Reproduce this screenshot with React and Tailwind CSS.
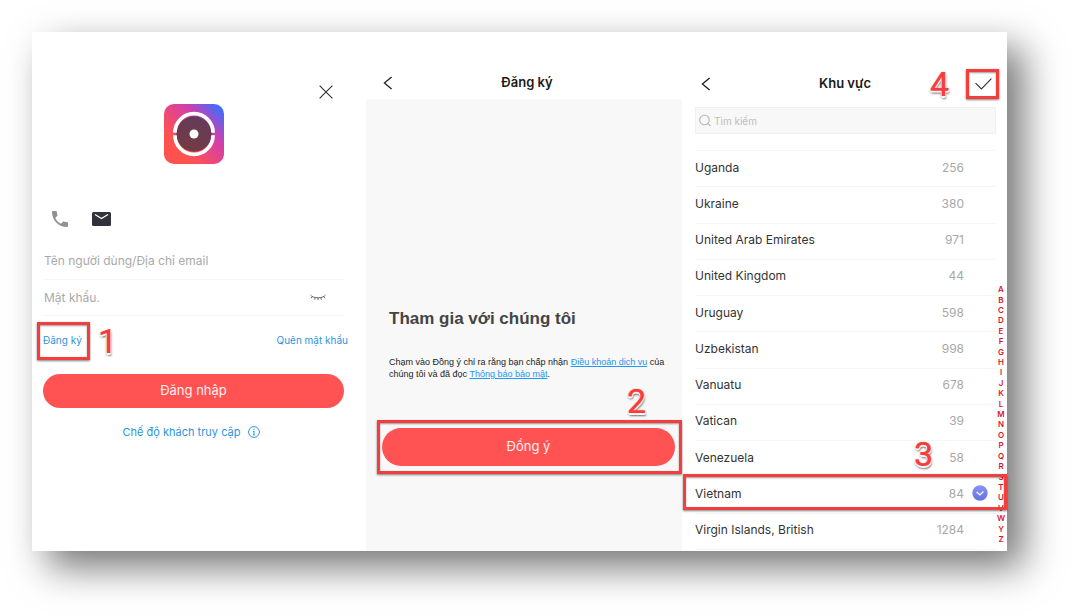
import React from 'react';

const countries = [
  ['Uganda', '256'],
  ['Ukraine', '380'],
  ['United Arab Emirates', '971'],
  ['United Kingdom', '44'],
  ['Uruguay', '598'],
  ['Uzbekistan', '998'],
  ['Vanuatu', '678'],
  ['Vatican', '39'],
  ['Venezuela', '58'],
  ['Vietnam', '84'],
  ['Virgin Islands, British', '1284'],
];

const letters = 'ABCDEFGHIJKLMNOPQRSTUVWYZ'.split('');

function Highlight({ className }) {
  return (
    <span
      aria-hidden="true"
      className={`pointer-events-none absolute z-20 border-[3px] border-[#f43d3d] shadow-[0_1px_2px_rgba(0,0,0,0.5),inset_0_1px_2px_rgba(0,0,0,0.4)] ${className}`}
    />
  );
}

function Step({ children, className }) {
  return (
    <span
      className={`pointer-events-none absolute z-20 font-['Roboto',sans-serif] text-[34px] leading-[34px] text-[#fa3c3c] [text-shadow:0_0_1px_#fa3c3c,1px_1px_0_#fff,-1px_1px_0_#fff,0_2px_0_#fff,1px_3px_2px_rgba(0,0,0,0.5),-1px_2px_2px_rgba(0,0,0,0.3)] ${className}`}
    >
      {children}
    </span>
  );
}

function BackButton() {
  return (
    <button type="button" aria-label="Quay lại" className="flex h-4 w-4 items-center justify-center text-[#222]">
      <svg width="10" height="14" viewBox="0 0 10 14" fill="none" stroke="currentColor" strokeWidth="1.3">
        <path d="M8.6 1 1.4 7l7.2 6" />
      </svg>
    </button>
  );
}

function Logo() {
  return (
    <svg width="60" height="60" viewBox="0 0 61 61" className="block">
      <defs>
        <linearGradient id="tile" x1="0.2" y1="0.75" x2="0.97" y2="0.03">
          <stop offset="0.05" stopColor="#ff524f" />
          <stop offset="0.58" stopColor="#d43eab" />
          <stop offset="0.95" stopColor="#3f6dff" />
        </linearGradient>
        <linearGradient id="disc" x1="0.3" y1="1" x2="0.6" y2="0">
          <stop offset="0" stopColor="#753b40" />
          <stop offset="1" stopColor="#643a5c" />
        </linearGradient>
      </defs>
      <rect width="61" height="61" rx="10" fill="url(#tile)" />
      <circle cx="30.5" cy="30.5" r="18" fill="url(#disc)" />
      <path d="M11.1 29.2a19.4 19.4 0 0 1 38.8 0M11.1 31.8a19.4 19.4 0 0 0 38.8 0" fill="none" stroke="#fff" strokeWidth="3.8" />
      <circle cx="30.5" cy="30.5" r="4.6" fill="#fff" />
    </svg>
  );
}

function LoginPanel() {
  return (
    <section className="flex flex-col bg-white pl-[11px] pr-[22px]">
      <div className="flex justify-end pr-2.5 pt-[52px]">
        <button type="button" aria-label="Đóng" className="p-px text-[#333]">
          <svg width="14" height="14" viewBox="0 0 14 14" fill="none" stroke="currentColor" strokeWidth="1.1">
            <path d="M.6.6l12.8 12.8M13.4.6.6 13.4" />
          </svg>
        </button>
      </div>
      <div className="flex justify-center pt-1">
        <Logo />
      </div>
      <div className="mt-[47px] flex items-center gap-6 pl-[9px]">
        <button type="button" aria-label="Điện thoại" className="text-[#919191]">
          <svg width="16" height="16" viewBox="3 3 18 18" fill="currentColor" className="block">
            <path d="M6.62 10.79c1.44 2.83 3.76 5.14 6.59 6.59l2.2-2.2c.27-.27.67-.36 1.02-.24 1.12.37 2.33.57 3.57.57.55 0 1 .45 1 1V20c0 .55-.45 1-1 1C10.61 21 3 13.39 3 4c0-.55.45-1 1-1h3.5c.55 0 1 .45 1 1 0 1.25.2 2.45.57 3.57.11.35.03.74-.25 1.02z" />
          </svg>
        </button>
        <button type="button" aria-label="Email">
          <svg width="19" height="14" viewBox="0 0 19 14" className="block">
            <rect width="19" height="14" rx="1.5" fill="#31323c" />
            <path d="M3 2.5 9.5 6.5 16 2.5" fill="none" stroke="#fff" strokeWidth="1.2" />
          </svg>
        </button>
      </div>
      <label className="mt-[15px] flex h-[38px] items-center border-b border-[#f5f5f5]">
        <input
          aria-label="Tên người dùng/Địa chỉ email"
          placeholder="Tên người dùng/Địa chỉ email"
          className="w-full bg-transparent pl-px text-[12px] leading-4 outline-none placeholder:text-[#a9a9a9]"
        />
      </label>
      <div className="flex h-9 items-center border-b border-[#f5f5f5] pr-[18px]">
        <input
          type="password"
          aria-label="Mật khẩu"
          placeholder="Mật khẩu."
          className="min-w-0 flex-1 bg-transparent pl-px text-[12px] leading-4 outline-none placeholder:text-[#a9a9a9]"
        />
        <button type="button" aria-label="Hiện mật khẩu" className="text-[#666]">
          <svg width="16" height="7" viewBox="0 0 16 7" fill="none" stroke="currentColor" strokeWidth="1" className="block">
            <path d="M.5 1C3 4.7 13 4.7 15.500 1M2.300 2.600 1 4.300M5.300 3.700 4.600 5.700M8 4v2.200M10.700 3.700l.7 2M13.700 2.600 15 4.300" />
          </svg>
        </button>
      </div>
      <div className="flex h-12 items-center justify-between text-[10px] leading-4 text-[#2b95e0]">
        <span className="relative">
          <a href="#dang-ky">Đăng ký</a>
          <Highlight className="-left-1.5 -right-2 -top-2.5 -bottom-3" />
          <Step className="left-[55px] -top-2">1</Step>
        </span>
        <a href="#quen" className="-mr-1">Quên mật khẩu</a>
      </div>
      <button type="button" className="mt-2.5 h-[34px] rounded-full bg-[#ff5252] text-[13px] text-[#fff0f0]">
        Đăng nhập
      </button>
      <div className="mt-4 flex items-center justify-center gap-2 pr-1 text-[11px] leading-4 text-[#2b95e0]">
        <a href="#khach">Chế độ khách truy cập</a>
        <svg width="12" height="12" viewBox="0 0 12 12" fill="none" stroke="currentColor">
          <circle cx="6" cy="6" r="5.400" />
          <path d="M6 5v4M6 2.700v1.300M5 5.300h1M5 8.900h2" />
        </svg>
      </div>
    </section>
  );
}

function JoinPanel() {
  return (
    <section className="flex flex-col bg-[#f8f8f8]">
      <header className="grid h-[67px] grid-cols-[16px_1fr] items-center bg-white pl-3.5 pr-6 pt-9 pb-px">
        <BackButton />
        <h2 className="text-center text-[13px] font-semibold text-[#1a1a1a]">Đăng ký</h2>
      </header>
      <div className="px-[23px] pt-[208px] font-['Liberation_Sans',Arial,sans-serif]">
        <h3 className="text-[17px] font-bold leading-6 text-[#444]">Tham gia với chúng tôi</h3>
        <p className="-mr-2 mt-[25px] text-[9px] leading-3 text-[#1c1c1c]">
          Chạm vào Đồng ý chỉ ra rằng bạn chấp nhận{' '}
          <a href="#dieu-khoan" className="text-[#2196f3] underline">Điều khoản dịch vụ</a> của chúng tôi và đã đọc{' '}
          <a href="#bao-mat" className="text-[#2196f3] underline">Thông báo bảo mật</a>.
        </p>
      </div>
      <div className="relative mt-[48px] flex pl-4 pr-[7px]">
        <button type="button" className="h-[38px] flex-1 rounded-full bg-[#ff5252] text-[13px] text-[#fff0f0]">
          Đồng ý
        </button>
        <Highlight className="left-[11px] right-0 -top-2 -bottom-2" />
        <Step className="right-9 -top-11">2</Step>
      </div>
    </section>
  );
}

function RegionPanel() {
  return (
    <section className="relative flex flex-col bg-white pb-px">
      <header className="relative grid h-[67px] grid-cols-[16px_1fr_15px] items-center px-4 pt-9">
        <BackButton />
        <h2 className="text-center text-[13px] font-semibold text-[#1a1a1a]">Khu vực</h2>
        <button type="button" aria-label="Xong" className="flex justify-center text-[#333]">
          <svg width="17" height="12" viewBox="0 0 17 12" fill="none" stroke="currentColor" strokeWidth="1.100" className="shrink-0">
            <path d="M.6 5.200 6.400 11 16.400.6" />
          </svg>
        </button>
        <Highlight className="right-2 top-[37px] h-[30px] w-[33px]" />
        <Step className="right-[58px] top-[35px]">4</Step>
      </header>
      <label className="mt-2 ml-[13px] mr-[11px] flex h-[27px] items-center gap-[3px] border border-[#f0f0f0] bg-[#f8f8f8] pl-[3px]">
        <svg width="12" height="13" viewBox="0 0 12 13" fill="none" stroke="#b5b5b5" strokeWidth="1.100">
          <circle cx="5.500" cy="6" r="4.800" />
          <path d="m9 9.700 2.500 2.300" />
        </svg>
        <input
          type="search"
          aria-label="Tìm kiếm"
          placeholder="Tìm kiếm"
          className="min-w-0 flex-1 bg-transparent text-[10px] leading-4 outline-none placeholder:text-[#bdbdbd]"
        />
      </label>
      <ul className="mt-4 ml-[13px] mr-[11px] flex flex-1 flex-col border-t border-[#f5f5f5]">
        {countries.map(([name, code]) => (
          <li key={name} className="relative flex flex-1 border-b border-[#f5f5f5]">
            <button type="button" className="flex h-full min-h-[35px] w-full items-center justify-between pb-[2px] pr-8 text-left text-[12px] leading-4 text-[#333]">
              <span>{name}</span>
              <span className="text-[#a8a8a8]">{code}</span>
            </button>
            {name === 'Vietnam' && (
              <>
                <svg width="16" height="16" viewBox="0 0 16 16" className="absolute right-2 top-2">
                  <defs>
                    <linearGradient id="tick" x1="0" y1="0" x2="0" y2="1">
                      <stop offset="0" stopColor="#8b93f5" />
                      <stop offset="1" stopColor="#6272e0" />
                    </linearGradient>
                  </defs>
                  <circle cx="8" cy="8" r="7.700" fill="url(#tick)" />
                  <path d="m4.700 7 3.300 2.900L11.400 6.500" fill="none" stroke="#fff" strokeWidth="1.300" />
                </svg>
                <Highlight className="-left-3 -right-[11px] -top-[3px] bottom-[3px]" />
                <Step className="right-[63px] -top-10">3</Step>
              </>
            )}
          </li>
        ))}
      </ul>
      <nav aria-label="Chữ cái" className="absolute bottom-[7px] right-0.5 top-[252px] flex w-2 flex-col text-center text-[8px] font-semibold text-[#d9152c]">
        {letters.map((l) => (
          <a key={l} href={`#${l}`} className="flex flex-1 items-center justify-center leading-[10px]">
            {l}
          </a>
        ))}
      </nav>
    </section>
  );
}

export default function App() {
  return (
    <main className="flex min-h-screen bg-white pb-[65px] pl-8 pr-[65px] pt-8 font-['Inter',sans-serif]">
      <div className="grid flex-1 grid-cols-[334fr_316fr_325fr] bg-white shadow-[16px_16px_36px_rgba(0,0,0,0.55)]">
        <LoginPanel />
        <JoinPanel />
        <RegionPanel />
      </div>
    </main>
  );
}
